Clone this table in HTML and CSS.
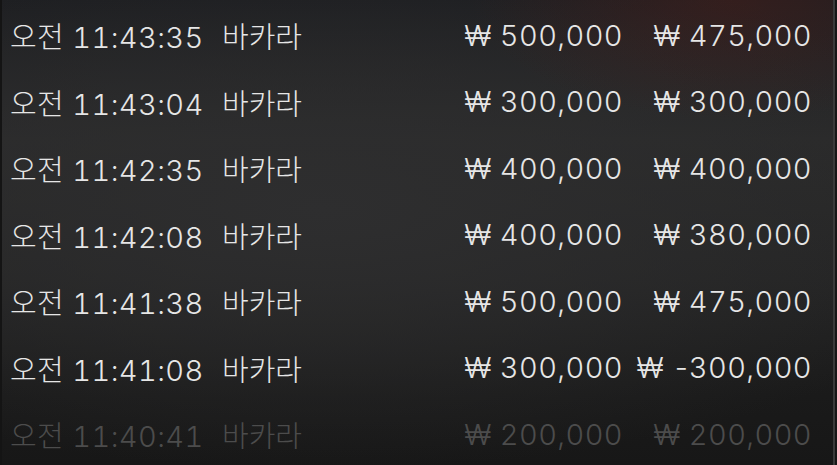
FILE: index.html
```html
<!DOCTYPE html>
<html lang="ko">
<head>
    <meta charset="UTF-8">
    <meta name="viewport" content="width=device-width, initial-scale=1.0">
    <title>베팅 내역</title>
    <link rel="stylesheet" href="styles.css">
</head>
<body>
    <div class="frame">
        <div class="history">
            <div class="row">
                <span class="time">오전 11:43:35</span>
                <span class="game">바카라</span>
                <span class="bet">₩ 500,000</span>
                <span class="win">₩ 475,000</span>
            </div>
            <div class="row">
                <span class="time">오전 11:43:04</span>
                <span class="game">바카라</span>
                <span class="bet">₩ 300,000</span>
                <span class="win">₩ 300,000</span>
            </div>
            <div class="row">
                <span class="time">오전 11:42:35</span>
                <span class="game">바카라</span>
                <span class="bet">₩ 400,000</span>
                <span class="win">₩ 400,000</span>
            </div>
            <div class="row">
                <span class="time">오전 11:42:08</span>
                <span class="game">바카라</span>
                <span class="bet">₩ 400,000</span>
                <span class="win">₩ 380,000</span>
            </div>
            <div class="row">
                <span class="time">오전 11:41:38</span>
                <span class="game">바카라</span>
                <span class="bet">₩ 500,000</span>
                <span class="win">₩ 475,000</span>
            </div>
            <div class="row">
                <span class="time">오전 11:41:08</span>
                <span class="game">바카라</span>
                <span class="bet">₩ 300,000</span>
                <span class="win">₩ <span class="minus">-</span>300,000</span>
            </div>
            <div class="row faded">
                <span class="time">오전 11:40:41</span>
                <span class="game">바카라</span>
                <span class="bet">₩ 200,000</span>
                <span class="win">₩ 200,000</span>
            </div>
        </div>
    </div>
</body>
</html>
```

FILE: styles.css
```css
html, body {
    height: 100%;
}
body {
    margin: 0;
    background: #161616;
    font-family: Inter, "Noto Sans CJK KR", sans-serif;
    color: #e6e6e6;
    overflow: hidden;
}
.frame {
    height: 100%;
    margin-right: 2px;
    border-left: 2px solid #141414;
    border-right: 2px solid #3a3a3a;
    background:
        radial-gradient(ellipse 260px 120px at 730px 0, rgba(80, 30, 25, 0.45), transparent),
        radial-gradient(ellipse 700px 260px at 320px 210px, #2e2e2f, transparent),
        linear-gradient(180deg, #1d1e21 0%, #2a2a2a 30%, #242424 60%, #1a1a1a 85%, #171717 100%);
}
.history {
    padding: 2px 21px 0 8px;
}
.row {
    display: flex;
    align-items: center;
    height: 66.5px;
    font-size: 29px;
    font-weight: 300;
    font-variant-numeric: tabular-nums;
    letter-spacing: 0.4px;
    white-space: nowrap;
}
.time {
    width: 212px;
}
.game {
    flex: 1;
    letter-spacing: 0;
}
.bet {
    text-align: right;
}
.win {
    width: 189px;
    text-align: right;
}
.minus {
    letter-spacing: -2px;
}
.faded {
    color: #4c4c4c;
}
```
